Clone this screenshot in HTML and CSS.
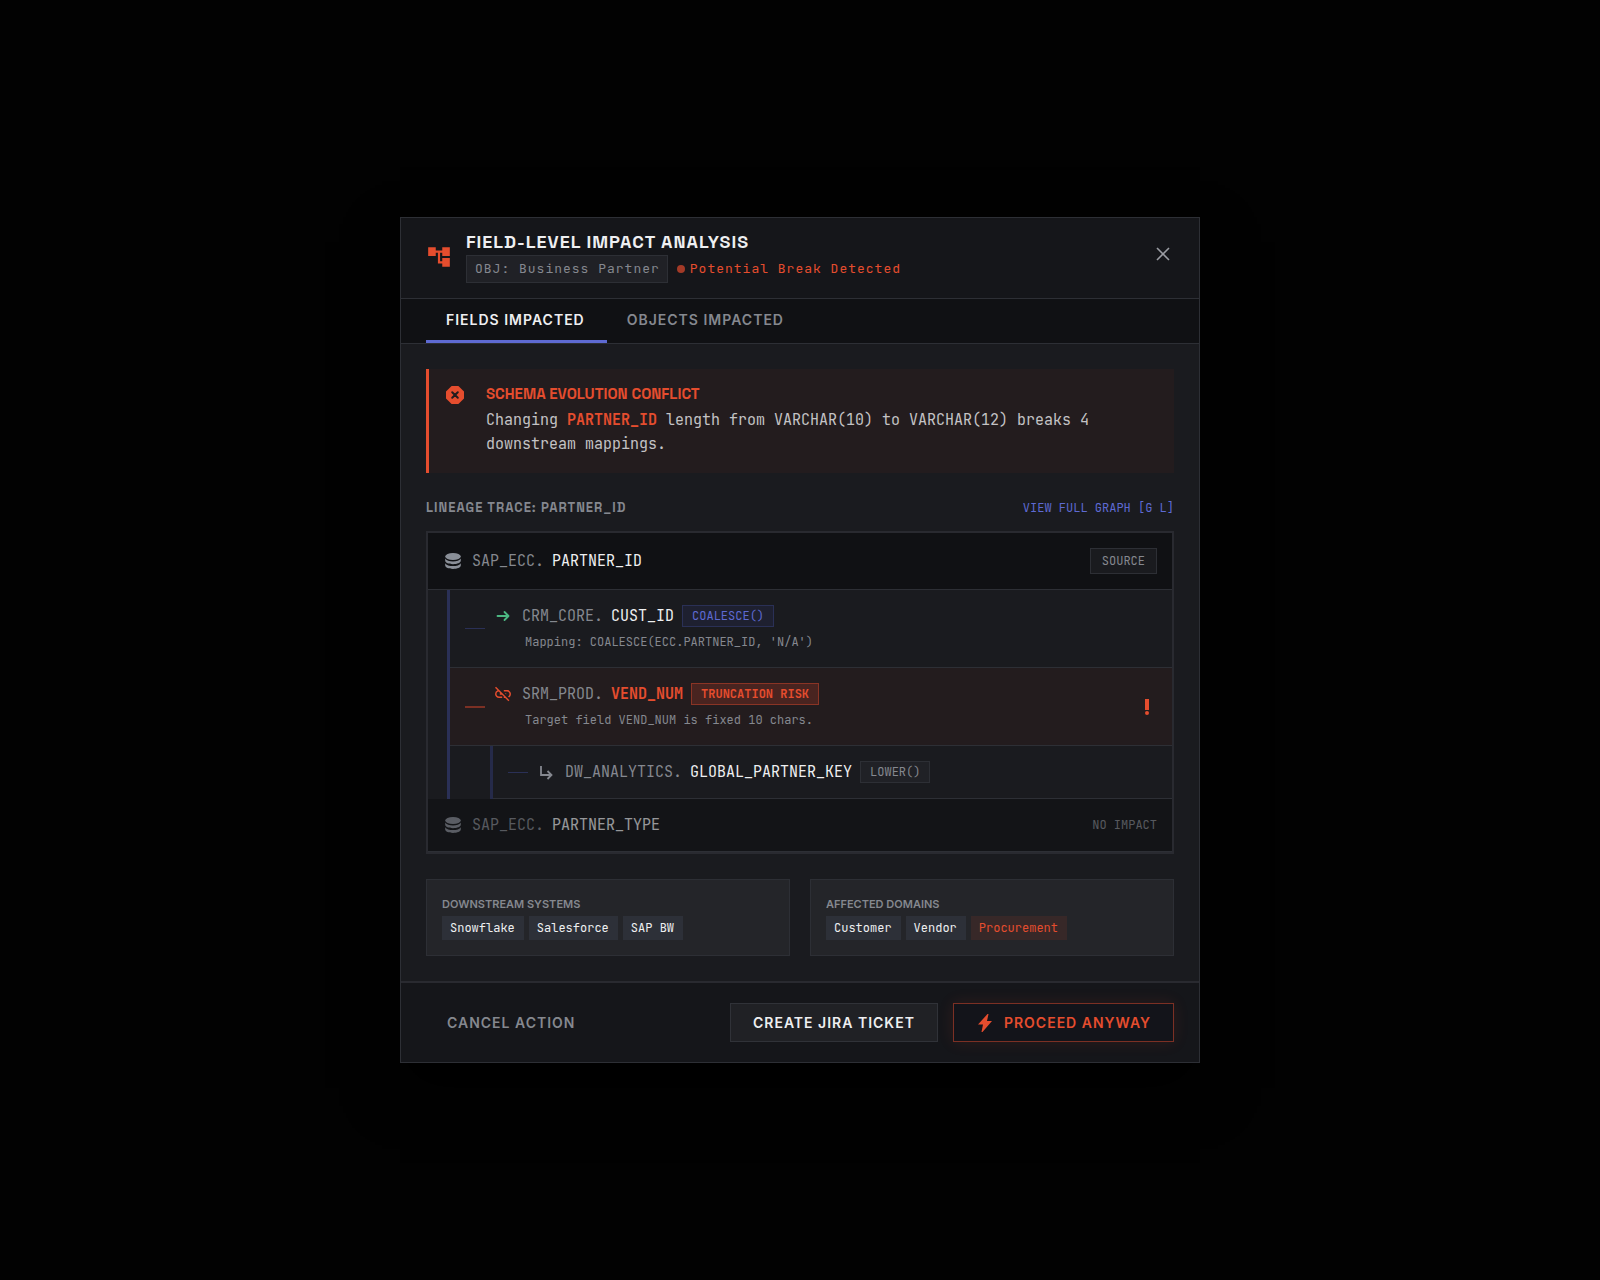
FILE: index.html
```html
<!DOCTYPE html>
<html lang="en">
<head>
<meta charset="utf-8">
<meta name="viewport" content="width=device-width, initial-scale=1">
<title>Field-Level Impact Analysis</title>
<link rel="stylesheet" href="styles.css">
</head>
<body>
<main class="backdrop">
  <section class="modal" role="dialog" aria-modal="true" aria-labelledby="modal-title">
    <header class="modal-header">
      <svg class="header-icon" viewBox="0 0 24 24" aria-hidden="true"><path fill="currentColor" d="M22 11V3h-7v3H9V3H2v8h7V8h2v10h4v3h7v-8h-7v3h-2V8h2v3z"/></svg>
      <div class="header-text">
        <h1 class="modal-title" id="modal-title">FIELD-LEVEL IMPACT ANALYSIS</h1>
        <div class="header-meta">
          <span class="object-chip">OBJ: Business Partner</span>
          <span class="break-status"><span class="status-dot"></span>Potential Break Detected</span>
        </div>
      </div>
      <button class="close-button" type="button" aria-label="Close">
        <svg class="close-icon" viewBox="0 0 14 14" aria-hidden="true"><path d="M1 1l12 12M13 1L1 13" fill="none" stroke="currentColor" stroke-width="1.6"/></svg>
      </button>
    </header>

    <nav class="tabs" role="tablist">
      <button class="tab tab-active" type="button" role="tab" aria-selected="true">FIELDS IMPACTED</button>
      <button class="tab" type="button" role="tab" aria-selected="false">OBJECTS IMPACTED</button>
    </nav>

    <div class="modal-body">
      <div class="alert" role="alert">
        <svg class="alert-icon" viewBox="0 0 18 18" aria-hidden="true"><path fill="currentColor" d="M5.600 0h6.800L18 5.600v6.800L12.400 18H5.600L0 12.400V5.600z"/><path d="M6.200 6.200l5.600 5.600M11.800 6.200l-5.600 5.600" fill="none" stroke="#231c1e" stroke-width="2" stroke-linecap="round"/></svg>
        <div>
          <h2 class="alert-title">SCHEMA EVOLUTION CONFLICT</h2>
          <p class="alert-text">Changing <strong>PARTNER_ID</strong> length from VARCHAR(10) to VARCHAR(12) breaks 4 downstream mappings.</p>
        </div>
      </div>

      <div class="section-head">
        <h2 class="section-title">LINEAGE TRACE: PARTNER_ID</h2>
        <a class="graph-link" href="#graph">VIEW FULL GRAPH [G L]</a>
      </div>

      <div class="lineage">
        <div class="root-row">
          <svg class="db-icon" viewBox="0 0 16 16" aria-hidden="true"><g fill="currentColor"><ellipse cx="8" cy="3.500" rx="7.800" ry="3.500"/><path d="M.2 5.600c1 2 4.300 2.900 7.800 2.900s6.800-.9 7.800-2.900v2.200c0 1.900-3.500 3.400-7.800 3.400s-7.800-1.500-7.800-3.400z"/><path d="M.2 10.200c1 2 4.300 2.900 7.800 2.900s6.800-.9 7.800-2.900v2.400c0 1.900-3.500 3.400-7.800 3.400s-7.800-1.500-7.800-3.400z"/></g></svg>
          <span class="system">SAP_ECC.</span>
          <span class="field">PARTNER_ID</span>
          <span class="source-tag">SOURCE</span>
        </div>

        <ul class="branch">
          <li class="node">
            <span class="dash"></span>
            <div class="node-main">
              <div class="node-line">
                <svg class="node-icon icon-green" viewBox="0 0 16 16" aria-hidden="true"><path d="M2.500 8h10.500M9.500 4L13.500 8l-4 4" fill="none" stroke="currentColor" stroke-width="1.800" stroke-linecap="round" stroke-linejoin="round"/></svg>
                <span class="system">CRM_CORE.</span>
                <span class="field">CUST_ID</span>
                <span class="badge badge-blue">COALESCE()</span>
              </div>
              <p class="node-note">Mapping: COALESCE(ECC.PARTNER_ID, 'N/A')</p>
            </div>
          </li>
          <li class="node node-risk">
            <span class="dash dash-risk"></span>
            <div class="node-main">
              <div class="node-line">
                <svg class="node-icon icon-red" viewBox="2 2 20 20" aria-hidden="true"><path fill="currentColor" d="M14.390 11L16 12.610V11zM17 7h-4v1.900h4c1.710 0 3.100 1.390 3.100 3.100 0 1.270-.77 2.370-1.870 2.840l1.400 1.400A4.986 4.986 0 0 0 22 12c0-2.760-2.240-5-5-5zM2 4.270l3.110 3.110A4.991 4.991 0 0 0 2 12c0 2.760 2.240 5 5 5h4v-1.900H7c-1.710 0-3.100-1.390-3.100-3.100 0-1.590 1.210-2.900 2.760-3.070L8.730 11H8v2h2.730L13 15.270V17h1.730l4.010 4L20 19.740 3.270 3 2 4.270z"/></svg>
                <span class="system">SRM_PROD.</span>
                <span class="field field-risk">VEND_NUM</span>
                <span class="badge badge-red">TRUNCATION RISK</span>
              </div>
              <p class="node-note">Target field VEND_NUM is fixed 10 chars.</p>
            </div>
            <svg class="risk-mark" viewBox="0 0 16 16" aria-label="Risk"><path fill="currentColor" d="M6 0h4v11H6zM8 12a2 2 0 1 1 0 4a2 2 0 0 1 0-4z"/></svg>
          </li>
          <li class="sub-item">
            <ul class="branch branch-nested">
              <li class="node">
                <span class="dash"></span>
                <div class="node-main">
                  <div class="node-line">
                    <svg class="node-icon" viewBox="0 0 16 16" aria-hidden="true"><path d="M3 2v9h10M9.500 7l4 4-4 4" fill="none" stroke="currentColor" stroke-width="1.800"/></svg>
                    <span class="system">DW_ANALYTICS.</span>
                    <span class="field">GLOBAL_PARTNER_KEY</span>
                    <span class="badge">LOWER()</span>
                  </div>
                </div>
              </li>
            </ul>
          </li>
        </ul>

        <div class="root-row root-muted">
          <svg class="db-icon" viewBox="0 0 16 16" aria-hidden="true"><g fill="currentColor"><ellipse cx="8" cy="3.500" rx="7.800" ry="3.500"/><path d="M.2 5.600c1 2 4.300 2.900 7.800 2.900s6.800-.9 7.800-2.900v2.200c0 1.900-3.500 3.400-7.800 3.400s-7.800-1.500-7.800-3.400z"/><path d="M.2 10.200c1 2 4.300 2.900 7.800 2.900s6.800-.9 7.800-2.900v2.400c0 1.900-3.500 3.400-7.800 3.400s-7.800-1.500-7.800-3.400z"/></g></svg>
          <span class="system">SAP_ECC.</span>
          <span class="field">PARTNER_TYPE</span>
          <span class="no-impact">NO IMPACT</span>
        </div>
      </div>

      <div class="cards">
        <section class="card">
          <h3 class="card-title">DOWNSTREAM SYSTEMS</h3>
          <div class="tags"><span class="tag">Snowflake</span><span class="tag">Salesforce</span><span class="tag">SAP BW</span></div>
        </section>
        <section class="card">
          <h3 class="card-title">AFFECTED DOMAINS</h3>
          <div class="tags"><span class="tag">Customer</span><span class="tag">Vendor</span><span class="tag tag-red">Procurement</span></div>
        </section>
      </div>
    </div>

    <footer class="modal-footer">
      <button class="button button-text" type="button">CANCEL ACTION</button>
      <button class="button button-outline" type="button">CREATE JIRA TICKET</button>
      <button class="button button-danger" type="button">
        <svg class="bolt-icon" viewBox="0 0 14 18" aria-hidden="true"><path fill="currentColor" d="M9.500 0L0 10.500h5L3.500 18h1L14 7H9L10.500 0z"/></svg>
        PROCEED ANYWAY
      </button>
    </footer>
  </section>
</main>
</body>
</html>
```
FILE: styles.css
```css
:root {
  --line: #2d2f35;
  --text: #eeeff1;
  --muted: #85888f;
  --red: #e54d2e;
  --blue: #5e6ad2;
  --green: #4cb782;
  --sans: Inter, "Liberation Sans", sans-serif;
  --display: "Space Grotesk", Inter, sans-serif;
  --mono: "JetBrains Mono", "DejaVu Sans Mono", "Liberation Mono", monospace;
}

* {
  box-sizing: border-box;
}

body {
  margin: 0;
  background: #020202;
  color: var(--text);
  font-family: var(--sans);
}

h1, h2, h3, p, ul {
  margin: 0;
  padding: 0;
}

button {
  font-family: var(--sans);
  cursor: pointer;
}

svg {
  display: block;
  flex: none;
}

.backdrop {
  min-height: 100vh;
  display: flex;
  align-items: center;
  justify-content: center;
}

.modal {
  width: 100%;
  max-width: 800px;
  border: 1px solid var(--line);
  background: #1a1b1f;
  box-shadow: 0 25px 50px #000;
}

.modal-header {
  display: flex;
  align-items: center;
  padding: 13px 25px 15px;
  background: #15161a;
  border-bottom: 1px solid var(--line);
}

.header-icon {
  width: 26px;
  height: 26px;
  margin-right: 14px;
  color: var(--red);
}

.header-text {
  flex: 1;
}

.modal-title {
  margin-bottom: 2px;
  font: 600 18px/22px var(--display);
  letter-spacing: 1px;
}

.header-meta {
  display: flex;
  align-items: center;
  gap: 9px;
  font: 13px/26px var(--mono);
  letter-spacing: 1px;
}

.object-chip {
  padding: 0 7px 0 8px;
  border: 1px solid var(--line);
  background: #202126;
  color: var(--muted);
}

.break-status {
  display: flex;
  align-items: center;
  gap: 5px;
  color: var(--red);
}

.status-dot {
  width: 8px;
  height: 8px;
  border-radius: 50%;
  background: #a33a27;
}

.close-button {
  display: flex;
  padding: 4px;
  margin-bottom: 7px;
  border: 0;
  background: none;
  color: #9a9ca3;
}

.close-icon {
  width: 14px;
  height: 14px;
}

.tabs {
  display: flex;
  padding: 0 25px;
  background: #101114;
  border-bottom: 1px solid var(--line);
}

.tab {
  padding: 0 22px 0 20px;
  border: 0;
  border-bottom: 3px solid transparent;
  background: none;
  color: var(--muted);
  font-size: 14px;
  font-weight: 600;
  line-height: 41px;
  letter-spacing: 1px;
}

.tab-active {
  border-bottom-color: var(--blue);
  color: var(--text);
}

.modal-body {
  padding: 25px;
}

.alert {
  display: flex;
  gap: 22px;
  padding: 15px 17px 17px;
  border-left: 3px solid var(--red);
  background: #231c1e;
}

.alert-icon {
  width: 18px;
  height: 18px;
  margin-top: 2px;
  color: var(--red);
}

.alert-title {
  margin-bottom: 4px;
  color: var(--red);
  font: 700 15px/20px var(--display);
}

.alert-text {
  color: #c4c3c5;
  font: 15px/24px var(--mono);
}

.alert-text strong {
  color: var(--red);
}

.section-head {
  display: flex;
  justify-content: space-between;
  align-items: center;
  margin: 25px 0 13px;
}

.section-title {
  color: var(--muted);
  font: 700 13px/20px var(--display);
  letter-spacing: 1px;
}

.graph-link {
  color: var(--blue);
  font: 12px/20px var(--mono);
  text-decoration: none;
}

.lineage {
  border: 2px solid #292a30;
  font: 15px/22px var(--mono);
}

.root-row {
  display: flex;
  align-items: center;
  gap: 8px;
  padding: 15px 15px 15px 17px;
  background: #101114;
  border-bottom: 1px solid var(--line);
}

.root-muted {
  background: #131417;
}

.root-muted .db-icon,
.root-muted .system,
.root-muted .field,
.root-muted .no-impact {
  opacity: 0.6;
}

.db-icon {
  width: 16px;
  height: 16px;
  margin-right: 3px;
  color: #8a8f98;
}

.system {
  color: var(--muted);
}

.source-tag,
.no-impact {
  margin-left: auto;
  color: var(--muted);
  font-size: 12px;
}

.source-tag {
  padding: 1px 11px;
  border: 1px solid var(--line);
  background: #1a1b1f;
}

.branch {
  margin-left: 19px;
  border-left: 3px solid #2a3056;
  list-style: none;
}

.branch-nested {
  margin-left: 40px;
  border-left-color: #252a49;
}

.node {
  display: flex;
  align-items: center;
  gap: 10px;
  padding: 15px;
  border-bottom: 1px solid var(--line);
}

.node-risk {
  background: #231c1e;
}

.dash {
  width: 20px;
  height: 1px;
  background: #2a3056;
}

.dash-risk {
  height: 2px;
  background: #7c3024;
}

.node-main {
  flex: 1;
}

.node-line {
  display: flex;
  align-items: center;
  gap: 8px;
}

.node-icon {
  width: 16px;
  height: 16px;
  margin-right: 3px;
  color: var(--muted);
}

.icon-green {
  color: var(--green);
}

.icon-red,
.risk-mark {
  color: var(--red);
}

.risk-mark {
  width: 16px;
  height: 16px;
  margin-right: 2px;
}

.field-risk {
  color: var(--red);
  font-weight: 700;
}

.badge {
  padding: 0 9px;
  border: 1px solid var(--line);
  background: #202126;
  color: var(--muted);
  font-size: 12px;
  line-height: 20px;
}

.badge-blue {
  border-color: #2a3056;
  background: #1e2030;
  color: var(--blue);
}

.badge-red {
  border-color: #8a3425;
  background: #492420;
  color: var(--red);
  font-weight: 700;
}

.node-note {
  margin: 5px 0 0 30px;
  color: var(--muted);
  font-size: 12px;
  line-height: 20px;
}

.cards {
  display: grid;
  grid-template-columns: 1fr 1fr;
  gap: 20px;
  margin-top: 25px;
}

.card {
  padding: 15px;
  border: 1px solid var(--line);
  background: #242529;
}

.card-title {
  margin-bottom: 3px;
  color: var(--muted);
  font-size: 11px;
  font-weight: 600;
  line-height: 18px;
}

.tags {
  display: flex;
  flex-wrap: wrap;
  gap: 5px;
}

.tag {
  padding: 0 9px 0 8px;
  background: #2d3038;
  font: 12px/24px var(--mono);
}

.tag-red {
  background: #372828;
  color: var(--red);
}

.modal-footer {
  display: flex;
  gap: 15px;
  padding: 20px 25px;
  background: #15161a;
  border-top: 2px solid #292a30;
}

.button {
  display: flex;
  align-items: center;
  padding: 0 22px;
  border: 1px solid transparent;
  background: none;
  font-size: 14px;
  font-weight: 600;
  line-height: 37px;
  letter-spacing: 1px;
}

.button-text {
  margin-right: auto;
  padding: 0 20px;
  color: var(--muted);
}

.button-outline {
  border-color: #303238;
  background: #202125;
  color: var(--text);
}

.button-danger {
  gap: 12px;
  padding-left: 24px;
  border-color: #7c3024;
  background: #13141a;
  box-shadow: 0 0 16px rgba(229, 77, 46, 0.12);
  color: var(--red);
}

.bolt-icon {
  width: 14px;
  height: 18px;
}
```
